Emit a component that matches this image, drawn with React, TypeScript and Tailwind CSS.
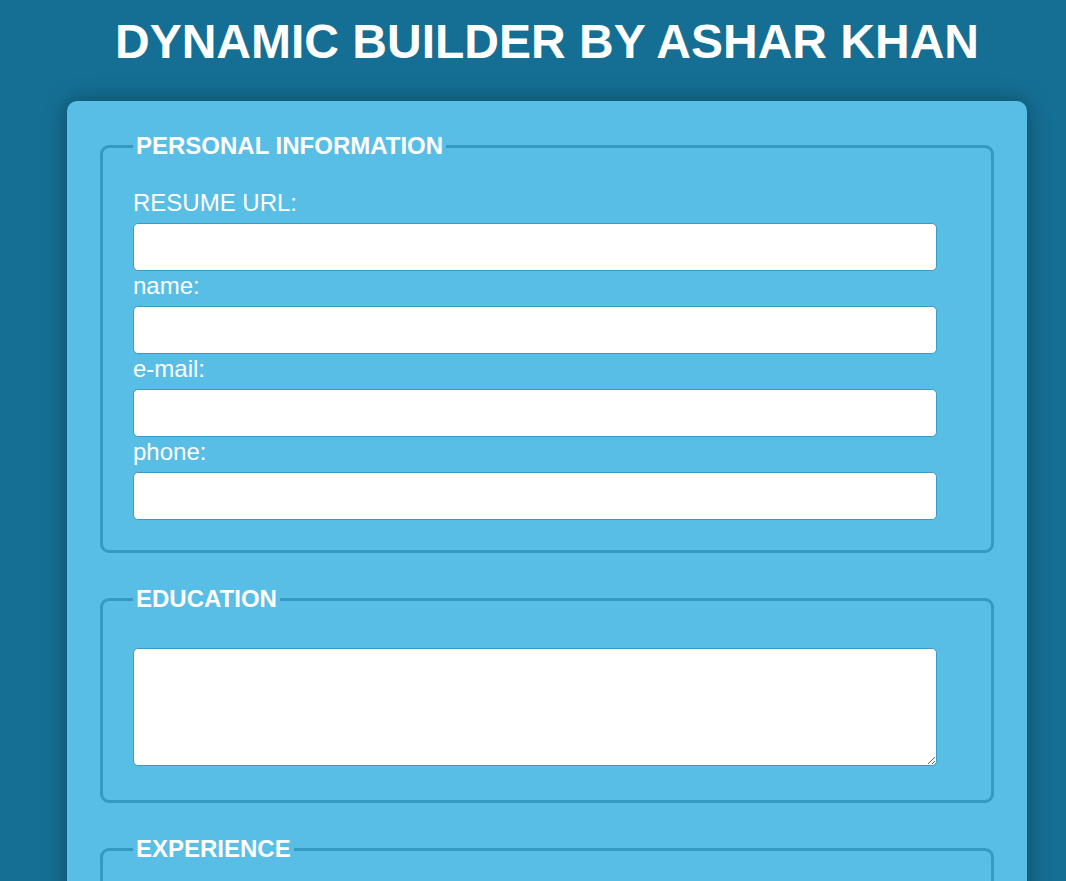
import React from "react";

const fields = ["RESUME URL:", "name:", "e-mail:", "phone:"];

const Section = ({ title, children, className }: { title: string; children: React.ReactNode; className?: string }) => {
  return (
    <fieldset
      className={`rounded-[9px] border-[3px] border-[#3699c2] px-[30px] ${className ?? ""}`}
    >
      <legend className="px-[3px] text-[24px] font-bold leading-[28px] text-white">{title}</legend>
      {children}
    </fieldset>
  );
};

const App = () => {
  return (
    <div className="min-h-[881px] bg-[#156f94] pl-[67px] font-['Liberation_Sans',Arial,sans-serif]">
      <div className="w-[960px]">
        <h1 className="mb-[32px] pt-[14px] text-center text-[48px] font-bold leading-[55px] text-white">
          DYNAMIC BUILDER BY ASHAR KHAN
        </h1>

        <div className="rounded-[10px] bg-[#59bee6] px-[33px] pb-[40px] pt-[31px] shadow-[0_0_22px_rgba(0,0,0,0.35)]">
          {/* personal */}
          <Section title="PERSONAL INFORMATION" className="mb-[32px] pb-[30px] pt-[29px]">
            {fields.map((label, index) => (
              <div key={index}>
                <label className={`block pb-[6px] text-[24px] leading-[28px] text-white ${index > 0 ? "pt-px" : ""}`}>
                  {label}
                </label>
                <input
                  type="text"
                  className="block h-[48px] w-[804px] rounded-[5px] border border-[#3a9bc4] bg-white px-2 outline-none"
                />
              </div>
            ))}
          </Section>

          {/* education */}
          <Section title="EDUCATION" className="mb-[32px] pb-[34px] pt-[35px]">
            <textarea className="block h-[118px] w-[804px] rounded-[5px] border border-[#3a9bc4] bg-white outline-none" />
          </Section>

          {/* experience */}
          <Section title="EXPERIENCE" className="pb-[34px] pt-[35px]">
            <textarea className="block h-[118px] w-[804px] rounded-[5px] border border-[#3a9bc4] bg-white outline-none" />
          </Section>
        </div>
      </div>
    </div>
  );
};

export default App;
